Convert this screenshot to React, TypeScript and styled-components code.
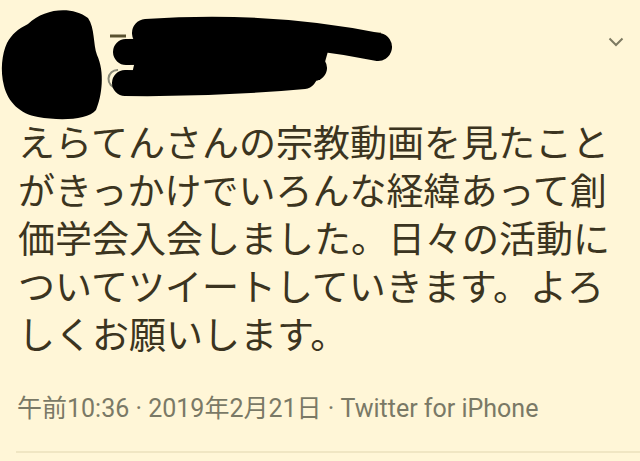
import React from "react";
import styled, { createGlobalStyle } from "styled-components";

const Global = createGlobalStyle`
  html, body { margin: 0; padding: 0; background: #fff6d7; }
  body { width: 640px; height: 461px; overflow: hidden; }
`;

const Page = styled.div`
  width: 640px;
  height: 461px;
  background: #fff6d7;
  display: flex;
  flex-direction: column;
  font-family: Roboto, "Noto Sans CJK JP", sans-serif;
`;

const Header = styled.div`
  display: flex;
  align-items: flex-start;
  justify-content: space-between;
  height: 117px;
`;

const Scribble = styled.svg`
  display: block;
  width: 400px;
  height: 117px;
  overflow: visible;
`;

const MoreButton = styled.div`
  width: 24px;
  height: 24px;
  margin: 30px 12px 0 0;
  display: flex;
  align-items: center;
  justify-content: center;
`;

const Body = styled.p`
  margin: 0;
  padding: 0 16px 0 18px;
  font-family: "Noto Sans CJK JP", sans-serif;
  font-size: 37px;
  line-height: 48px;
  color: #3b3420;
`;

const Meta = styled.div`
  margin-top: 37px;
  padding-left: 17px;
  font-size: 25px;
  line-height: 30px;
  color: #7a7966;
`;

const Divider = styled.div`
  margin: 27px 0 0 16px;
  height: 2px;
  background: #f0e6c3;
`;

export default function App() {
  return (
    <Page>
      <Global />
      <Header>
        <Scribble viewBox="0 0 400 117">
          <path d="M110 36 L126 36" stroke="#5a5230" strokeWidth="3" />
          <path d="M365 34 L381 34" stroke="#6a6440" strokeWidth="3" />
          <path d="M118 70 A9 9 0 1 0 117 88" stroke="#8a8a78" strokeWidth="2" fill="none" />
          <path
            d="M28 24 C45 8 72 6 88 18 C95 28 93 44 97 55 C105 72 102 96 96 110 C88 120 60 121 38 117 C20 114 8 102 4 86 C0 70 2 54 7 43 C12 34 18 29 28 24 Z"
            fill="#000"
          />
          <g stroke="#000" strokeLinecap="round" fill="none">
            <path d="M146 33 C220 28 300 31 378 47" strokeWidth="28" />
            <path d="M126 52 C200 50 260 56 314 68" strokeWidth="26" />
            <path d="M125 83 C200 84 260 80 304 76" strokeWidth="26" />
          </g>
          <path d="M140 40 L330 44 L320 80 L130 82 Z" fill="#000" />
        </Scribble>
        <MoreButton>
          <svg width="16" height="10" viewBox="0 0 16 10">
            <path d="M1.5 1.5 L8 8 L14.5 1.5" stroke="#7d7a62" strokeWidth="2" fill="none" />
          </svg>
        </MoreButton>
      </Header>
      <Body>
        えらてんさんの宗教動画を見たこと<br />
        がきっかけでいろんな経緯あって創<br />
        価学会入会しました。日々の活動に<br />
        ついてツイートしていきます。よろ<br />
        しくお願いします。
      </Body>
      <Meta>午前10:36 · 2019年2月21日 · Twitter for iPhone</Meta>
      <Divider />
    </Page>
  );
}
